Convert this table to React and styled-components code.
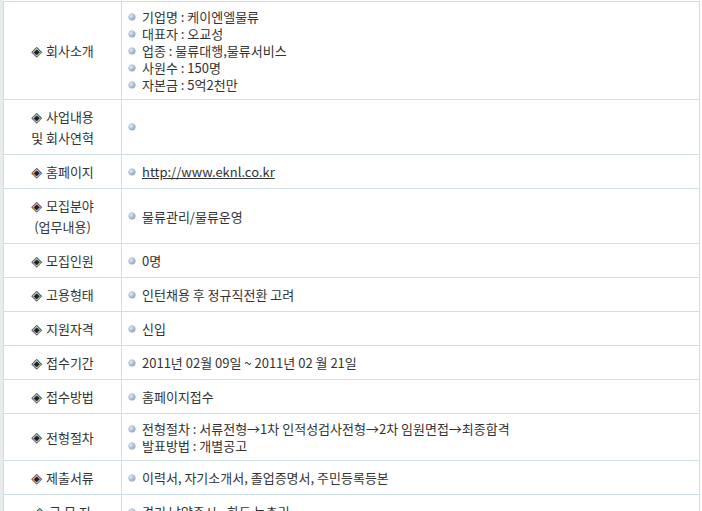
import React from 'react';
import styled, { createGlobalStyle } from 'styled-components';

const GlobalStyle = createGlobalStyle`
  html, body {
    margin: 0;
    padding: 0;
    background: #ffffff;
    font-family: "Noto Sans CJK KR", "Noto Sans", sans-serif;
    font-size: 13px;
    color: #333333;
  }
`;

const Page = styled.div`
  display: flex;
  height: 511px;
  overflow: hidden;
  background: #ffffff;
`;

const Gutter = styled.div`
  width: 3px;
  flex: none;
  background: #e6ebec;
`;

const Sheet = styled.div`
  width: 697px;
  flex: none;
`;

const Table = styled.table`
  width: 100%;
  border-collapse: collapse;
  table-layout: fixed;
  border-top: 1px solid #cddfe5;
  margin-top: 1px;
`;

const Row = styled.tr`
  border-bottom: 1px solid #cddfe5;
`;

const Label = styled.th`
  width: 117px;
  padding: 6px 0;
  font-weight: normal;
  text-align: center;
  color: #333333;
  border-left: 1px solid #cddfe5;
  border-right: 1px solid #cddfe5;
  vertical-align: middle;
`;

const LabelLine = styled.div`
  display: flex;
  align-items: center;
  justify-content: center;
  height: 21px;
  line-height: 21px;
`;

const Diamond = styled.span`
  display: inline-block;
  font-family: "DejaVu Sans", sans-serif;
  font-size: 14px;
  line-height: 1;
  margin-right: 4px;
  color: #222222;
`;

const Cell = styled.td`
  padding: 6px 0 6px 7px;
  border-right: 1px solid #cddfe5;
  vertical-align: middle;
`;

const List = styled.ul`
  list-style: none;
  margin: 0;
  padding: 0;
`;

const Item = styled.li`
  display: flex;
  align-items: center;
  height: 17px;
  line-height: 17px;
  white-space: nowrap;
`;

const Bullet = styled.span`
  width: 6px;
  height: 6px;
  border-radius: 50%;
  flex: none;
  margin-right: 7px;
  background: radial-gradient(circle at 35% 35%, #e4edf7 0%, #9fb5cf 55%, #6f8cae 100%);
  box-shadow: 0 0 0 0.5px #8aa2bf;
`;

const Link = styled.a`
  color: #333333;
  text-decoration: underline;
`;

const rows = [
  { label: ['회사소개'], items: ['기업명 : 케이엔엘물류', '대표자 : 오교성', '업종 : 물류대행,물류서비스', '사원수 : 150명', '자본금 : 5억2천만'] },
  { label: ['사업내용', '및 회사연혁'], items: [''] },
  { label: ['홈페이지'], items: [{ link: 'http://www.eknl.co.kr' }] },
  { label: ['모집분야', '(업무내용)'], items: ['물류관리/물류운영'] },
  { label: ['모집인원'], items: ['0명'] },
  { label: ['고용형태'], items: ['인턴채용 후 정규직전환 고려'] },
  { label: ['지원자격'], items: ['신입'] },
  { label: ['접수기간'], items: ['2011년 02월 09일 ~ 2011년 02 월 21일'] },
  { label: ['접수방법'], items: ['홈페이지접수'] },
  { label: ['전형절차'], items: ['전형절차 : 서류전형→1차 인적성검사전형→2차 임원면접→최종합격', '발표방법 : 개별공고'] },
  { label: ['제출서류'], items: ['이력서, 자기소개서, 졸업증명서, 주민등록등본'] },
  { label: ['근 무 지'], items: ['경기 남양주시 - 화도 녹촌리'] },
];

export default function App() {
  return (
    <Page>
      <GlobalStyle />
      <Gutter />
      <Sheet>
        <Table>
          <tbody>
            {rows.map((row, i) => (
              <Row key={i}>
                <Label>
                  {row.label.map((line, j) => (
                    <LabelLine key={j}>
                      {j === 0 && <Diamond>◈</Diamond>}
                      {line}
                    </LabelLine>
                  ))}
                </Label>
                <Cell>
                  <List>
                    {row.items.map((item, k) => (
                      <Item key={k}>
                        <Bullet />
                        {typeof item === 'string' ? item : <Link href="#">{item.link}</Link>}
                      </Item>
                    ))}
                  </List>
                </Cell>
              </Row>
            ))}
          </tbody>
        </Table>
      </Sheet>
    </Page>
  );
}
